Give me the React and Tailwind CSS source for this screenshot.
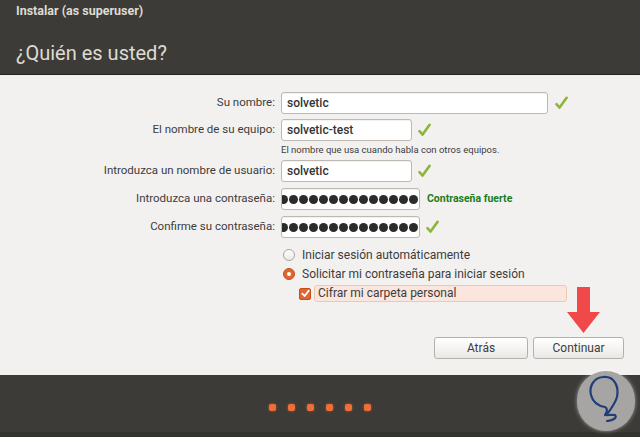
import React from "react";

function Check({ className = "" }) {
  return (
    <svg width="13" height="14" viewBox="0 0 13 14" className={className}>
      <path d="M1.5 8.2 L4.6 11.6 L11.6 1.8" fill="none" stroke="#8db53c" strokeWidth="2.6" strokeLinecap="round" strokeLinejoin="round" />
    </svg>
  );
}

function Field({ label, boxClass, children, after }) {
  return (
    <div className="flex items-center h-[22px]">
      <div className="w-[275px] text-right text-[11.5px] text-[#3c3c3c]">{label}</div>
      <div
        className={`ml-[6px] h-[22px] bg-white border border-[#bdb8b1] rounded-[3px] flex items-center px-[5px] text-[12px] font-medium text-[#333] overflow-hidden shadow-[inset_0_1px_1px_rgba(0,0,0,0.06)] ${boxClass}`}
      >
        {children}
      </div>
      {after}
    </div>
  );
}

function Dots() {
  return (
    <div className="flex items-center gap-[1px] -ml-[8px]">
      {Array.from({ length: 14 }).map((_, i) => (
        <span key={i} className="block w-[9px] h-[9px] rounded-full bg-[#2b2b2b] shrink-0" />
      ))}
    </div>
  );
}

export default function App() {
  return (
    <div className="w-[640px] h-[437px] flex flex-col overflow-hidden relative font-['Roboto','Noto_Sans',sans-serif]">
      <div className="h-[75px] bg-[#3c3b37] border-b border-[#262522] px-[16px] flex flex-col">
        <div className="mt-[3px] text-[12.5px] font-bold text-[#dfdbd2] leading-[16px]">Instalar (as superuser)</div>
        <div className="mt-[22px] text-[20px] text-[#dfdbd2] leading-[24px]">¿Quién es usted?</div>
      </div>

      <div className="flex-1 bg-[#f2f1f0] flex flex-col relative">
        <div className="mt-[17px]">
          <Field label="Su nombre:" boxClass="w-[267px]" after={<Check className="ml-[7px]" />}>solvetic</Field>
        </div>
        <div className="mt-[5px]">
          <Field label="El nombre de su equipo:" boxClass="w-[131px]" after={<Check className="ml-[6px]" />}>solvetic-test</Field>
        </div>
        <div className="ml-[281px] mt-[1px] text-[9.5px] text-[#3c3c3c] leading-[16px]">El nombre que usa cuando habla con otros equipos.</div>
        <div className="mt-[2px]">
          <Field label="Introduzca un nombre de usuario:" boxClass="w-[131px]" after={<Check className="ml-[6px]" />}>solvetic</Field>
        </div>
        <div className="mt-[6px]">
          <Field
            label="Introduzca una contraseña:"
            boxClass="w-[139px]"
            after={<span className="ml-[7px] text-[10.5px] font-bold text-[#1b7d1b]">Contraseña fuerte</span>}
          >
            <Dots />
          </Field>
        </div>
        <div className="mt-[6px]">
          <Field label="Confirme su contraseña:" boxClass="w-[139px]" after={<Check className="ml-[6px]" />}>
            <Dots />
          </Field>
        </div>

        <div className="ml-[283px] mt-[7px] flex items-center h-[19px] text-[12px] text-[#3c3c3c]">
          <span className="w-[12px] h-[12px] rounded-full border border-[#a8a49e] bg-gradient-to-b from-white to-[#ebe9e6]" />
          <span className="ml-[7px]">Iniciar sesión automáticamente</span>
        </div>
        <div className="ml-[283px] flex items-center h-[19px] text-[12px] text-[#3c3c3c]">
          <span className="w-[12px] h-[12px] rounded-full bg-[#e2642e] border border-[#c44f1c] flex items-center justify-center">
            <span className="w-[4px] h-[4px] rounded-full bg-white" />
          </span>
          <span className="ml-[7px]">Solicitar mi contraseña para iniciar sesión</span>
        </div>
        <div className="ml-[299px] mt-[2px] flex items-center h-[17px] text-[12px] text-[#3c3c3c]">
          <span className="w-[12px] h-[12px] rounded-[2px] bg-[#e2642e] border border-[#c44f1c] flex items-center justify-center">
            <svg width="9" height="9" viewBox="0 0 9 9">
              <path d="M1.3 4.6 L3.6 7 L7.8 1.6" fill="none" stroke="white" strokeWidth="1.8" strokeLinecap="round" strokeLinejoin="round" />
            </svg>
          </span>
          <span className="ml-[3px] w-[253px] h-[17px] rounded-[3px] bg-[#fae6dd] border border-[#efc7b6] pl-[3px] leading-[15px]">Cifrar mi carpeta personal</span>
        </div>

        <div className="absolute left-[567px] top-[212px]">
          <svg width="34" height="47" viewBox="0 0 34 47">
            <path d="M10 0 H23 V25 H33 L16.5 46 L0 25 H10 Z" fill="#f0494a" />
          </svg>
        </div>

        <div className="mt-auto mb-[16px] flex justify-end gap-[5px] pr-[16px]">
          <button className="w-[94px] h-[22px] rounded-[3px] border border-[#b5b1aa] bg-gradient-to-b from-white to-[#ebe9e6] text-[12px] text-[#3c3c3c] leading-[20px]">Atrás</button>
          <button className="w-[91px] h-[22px] rounded-[3px] border border-[#b5b1aa] bg-gradient-to-b from-white to-[#ebe9e6] text-[12px] text-[#3c3c3c] leading-[20px]">Continuar</button>
        </div>
      </div>

      <div className="h-[62px] bg-[#3c3b37] flex flex-col">
        <div className="flex-1 flex items-center justify-center gap-[12px] pt-[8px]">
          {Array.from({ length: 6 }).map((_, i) => (
            <span key={i} className="block w-[7px] h-[7px] rounded-[2px] bg-[#ee6e3a] shadow-[0_0_3px_rgba(240,110,60,0.6)]" />
          ))}
        </div>
        <div className="h-[5px] bg-[#33322f]" />
      </div>

      <div className="absolute left-[577px] top-[371px] w-[58px] h-[60px] rounded-full bg-[#a6a5a3] shadow-[0_0_4px_rgba(255,255,255,0.5)]">
        <svg width="58" height="60" viewBox="0 0 58 60">
          <path
            d="M30 50 C38 49 40 46 38 44 C33 43 26 46 31 42 C34 37 38 33 40 26 C42 16 38 5 26 6 C16 7 12 16 14 24 C16 32 22 35 28 36 C30 37 31 40 28 44"
            fill="none"
            stroke="#1f3f7a"
            strokeWidth="2.2"
            strokeLinecap="round"
          />
        </svg>
      </div>
    </div>
  );
}
